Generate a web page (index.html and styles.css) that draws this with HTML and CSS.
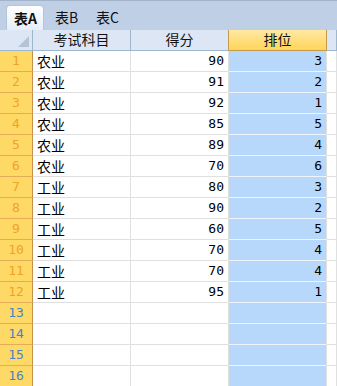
FILE: index.html
```html
<!DOCTYPE html>
<html lang="zh-CN">
<head>
    <meta charset="UTF-8">
    <meta name="viewport" content="width=device-width, initial-scale=1.0">
    <title>成绩表</title>
    <link rel="stylesheet" href="styles.css">
</head>
<body>
    <div class="tabs">
        <div class="tab active">表A</div>
        <div class="tab">表B</div>
        <div class="tab">表C</div>
    </div>
    <div class="sheet" id="sheet">
        <div class="corner"></div>
        <div class="col-head">考试科目</div>
        <div class="col-head before-sel">得分</div>
        <div class="col-head selected">排位</div>
        <div class="col-head rest"></div>
    </div>

    <script>
        const rows = [
            ['农业', 90, 3], ['农业', 91, 2], ['农业', 92, 1], ['农业', 85, 5],
            ['农业', 89, 4], ['农业', 70, 6], ['工业', 80, 3], ['工业', 90, 2],
            ['工业', 60, 5], ['工业', 70, 4], ['工业', 70, 4], ['工业', 95, 1]
        ];
        const sheet = document.getElementById('sheet');

        function cell(cls, text) {
            const div = document.createElement('div');
            div.className = cls;
            div.textContent = text;
            sheet.appendChild(div);
        }

        for (let i = 0; i < 16; i++) {
            const r = rows[i] || ['', '', ''];
            cell(i < rows.length ? 'row-head used' : 'row-head', i + 1);
            cell('cell text', r[0]);
            cell('cell num', r[1]);
            cell('cell num sel', r[2]);
            cell('cell rest', '');
        }
    </script>
</body>
</html>
```

FILE: styles.css
```css
body {
    margin: 0;
    font-family: "Noto Sans CJK SC", sans-serif;
    font-size: 14px;
    background-color: #fff;
    overflow: hidden;
}
.tabs {
    height: 30px;
    background-color: #bfd0e6;
    border-top: 1px solid #a3b3c8;
    display: flex;
    align-items: flex-end;
    padding-left: 6px;
    box-sizing: border-box;
}
.tab {
    width: 38px;
    height: 25px;
    line-height: 24px;
    padding-left: 8px;
    margin-right: 3px;
    box-sizing: border-box;
    color: #111;
    font-size: 14px;
}
.tab.active {
    font-weight: bold;
    background: linear-gradient(#ffffff, #e6eef9);
    border: 1px solid #b3c5dc;
    border-bottom: none;
    border-radius: 4px 4px 0 0;
    padding-left: 7px;
}
.sheet {
    display: grid;
    grid-template-columns: 33px 98px 98px 98px 1fr;
    grid-auto-rows: 21px;
}
.sheet > div {
    box-sizing: border-box;
    border-right: 1px solid #e0e0e0;
    border-bottom: 1px solid #e0e0e0;
    white-space: nowrap;
    overflow: hidden;
}
.corner {
    position: relative;
    background-color: #dce6f4;
}
.sheet > .corner,
.sheet > .col-head {
    border-color: #9eb6ce;
}
.corner::after {
    content: "";
    position: absolute;
    right: 3px;
    bottom: 3px;
    border-style: solid;
    border-width: 0 0 11px 11px;
    border-color: transparent transparent #b5c3d6 transparent;
}
.col-head {
    background-color: #dce6f4;
    text-align: center;
    line-height: 19px;
    color: #111;
}
.sheet > .before-sel {
    border-right-color: #c49a4e;
}
.sheet > .col-head.selected {
    background: linear-gradient(#ffe9a4, #ffd559);
    border-color: #c49a4e;
}
.row-head {
    background-color: #ffd966;
    color: #4a82c8;
    text-align: center;
    line-height: 20px;
    font-family: "DejaVu Sans Mono", monospace;
    font-size: 13px;
}
.sheet > .row-head {
    border-right-color: #c6914a;
    border-bottom-color: #e3ac55;
}
.row-head.used {
    color: #f0a224;
}
.cell {
    line-height: 20px;
    color: #000;
}
.text {
    padding-left: 4px;
}
.num {
    text-align: right;
    padding-right: 4px;
    font-family: "DejaVu Sans Mono", monospace;
    font-size: 13px;
}
.sheet > .sel {
    background-color: #b8d8fb;
    border-bottom-color: #eef4fb;
    border-right-color: #e0e0e0;
}
```
